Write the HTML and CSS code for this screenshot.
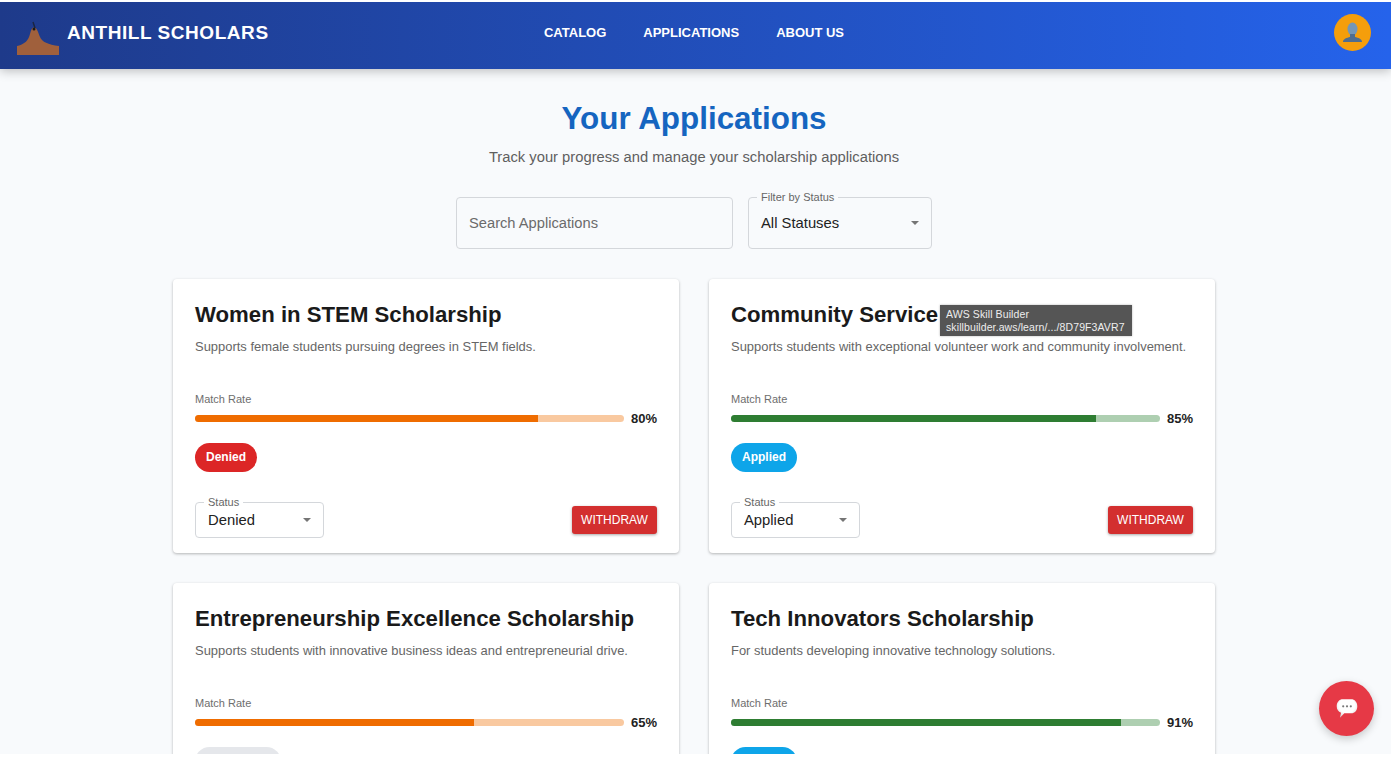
FILE: index.html
```html
<!DOCTYPE html>
<html lang="en">
<head>
  <meta charset="UTF-8">
  <meta name="viewport" content="width=device-width, initial-scale=1.0">
  <title>Your Applications</title>
  <link rel="stylesheet" href="styles.css">
</head>
<body>
  <div class="screen">
    <header class="topbar">
      <div class="brand">
        <svg class="brand-logo" viewBox="0 0 42 36" width="42" height="36">
          <path d="M0 35V26C6 24.500 10 22 12 17C14 12 14 7.500 17 7.500C20 7.500 21 12 23 17C25 22 31 24.500 42 26V35Z" fill="#a0603c"/>
          <path d="M16 2L18 8" stroke="#1a2540" stroke-width="1.4"/>
          <circle cx="17" cy="9" r="1.500" fill="#1a1a1a"/>
        </svg>
        <span class="brand-name">ANTHILL SCHOLARS</span>
      </div>
      <nav class="nav">
        <a>CATALOG</a>
        <a>APPLICATIONS</a>
        <a>ABOUT US</a>
      </nav>
      <div class="avatar">
        <svg viewBox="0 0 37 37" width="37" height="37">
          <ellipse cx="18.500" cy="15" rx="5" ry="6.500" fill="#7396b6"/>
          <path d="M16 20H21V23C24 24 28 24.500 28 28H9C9 24.500 13 24 16 23Z" fill="#4f6d8f"/>
        </svg>
      </div>
    </header>

    <main class="content">
      <h1 class="title">Your Applications</h1>
      <p class="subtitle">Track your progress and manage your scholarship applications</p>

      <div class="filters">
        <div class="field search-field">
          <span class="placeholder">Search Applications</span>
        </div>
        <div class="field status-field">
          <span class="field-label">Filter by Status</span>
          <span class="field-value">All Statuses</span>
          <span class="caret"></span>
        </div>
      </div>

      <div class="cards">
        <section class="card">
          <h2>Women in STEM Scholarship</h2>
          <p class="desc">Supports female students pursuing degrees in STEM fields.</p>
          <div class="match-label">Match Rate</div>
          <div class="match">
            <div class="bar orange"><div class="fill" style="width: 80%"></div></div>
            <span class="pct">80%</span>
          </div>
          <span class="chip denied">Denied</span>
          <div class="card-actions">
            <div class="field mini-select">
              <span class="field-label">Status</span>
              <span class="field-value">Denied</span>
              <span class="caret"></span>
            </div>
            <button class="withdraw">WITHDRAW</button>
          </div>
        </section>

        <section class="card">
          <h2>Community Service</h2>
          <p class="desc">Supports students with exceptional volunteer work and community involvement.</p>
          <div class="match-label">Match Rate</div>
          <div class="match">
            <div class="bar green"><div class="fill" style="width: 85%"></div></div>
            <span class="pct">85%</span>
          </div>
          <span class="chip applied">Applied</span>
          <div class="card-actions">
            <div class="field mini-select">
              <span class="field-label">Status</span>
              <span class="field-value">Applied</span>
              <span class="caret"></span>
            </div>
            <button class="withdraw">WITHDRAW</button>
          </div>
        </section>

        <section class="card">
          <h2>Entrepreneurship Excellence Scholarship</h2>
          <p class="desc">Supports students with innovative business ideas and entrepreneurial drive.</p>
          <div class="match-label">Match Rate</div>
          <div class="match">
            <div class="bar orange"><div class="fill" style="width: 65%"></div></div>
            <span class="pct">65%</span>
          </div>
          <span class="chip draft">&nbsp;</span>
        </section>

        <section class="card">
          <h2>Tech Innovators Scholarship</h2>
          <p class="desc">For students developing innovative technology solutions.</p>
          <div class="match-label">Match Rate</div>
          <div class="match">
            <div class="bar green"><div class="fill" style="width: 91%"></div></div>
            <span class="pct">91%</span>
          </div>
          <span class="chip applied cut">&nbsp;</span>
        </section>
      </div>
    </main>

    <div class="link-tip">
      <div>AWS Skill Builder</div>
      <div>skillbuilder.aws/learn/.../8D79F3AVR7</div>
    </div>

    <button class="chat-fab">
      <svg viewBox="0 0 24 24" width="26" height="26">
        <defs>
          <radialGradient id="bubble" cx="50%" cy="35%" r="65%">
            <stop offset="60%" stop-color="#fff"/>
            <stop offset="100%" stop-color="#d8d2d2"/>
          </radialGradient>
        </defs>
        <path d="M8 3H16C19 3 21.500 5.500 21.500 9.500C21.500 13.500 19 16 16 16H9.500L5.500 20L6.500 15.500C4 14.500 2.500 12.500 2.500 9.500C2.500 5.500 5 3 8 3Z" fill="url(#bubble)"/>
        <circle cx="8.500" cy="9.500" r="1" fill="#777"/>
        <circle cx="12" cy="9.500" r="1" fill="#777"/>
        <circle cx="15.500" cy="9.500" r="1" fill="#777"/>
      </svg>
    </button>
  </div>
</body>
</html>
```

FILE: styles.css
```css
* {
  box-sizing: border-box;
}

html, body {
  height: 100%;
}

body {
  margin: 0;
  background-color: #fff;
  overflow: hidden;
  font-family: "Liberation Sans", Arial, sans-serif;
}

.screen {
  position: relative;
  width: 1391px;
  height: 752px;
  margin-top: 2px;
  background-color: #f8fafc;
  overflow: hidden;
}

/* top bar */
.topbar {
  display: grid;
  grid-template-columns: 1fr auto 1fr;
  align-items: center;
  height: 67px;
  padding: 0 20px 0 17px;
  background: linear-gradient(90deg, #1e3a8a, #2563eb);
  box-shadow: 0 2px 10px rgba(0, 0, 0, 0.25);
}

.brand {
  display: flex;
  align-items: center;
  gap: 8px;
}

.brand-logo {
  margin-top: 4px;
}

.brand-name {
  margin-top: -6px;
  font-size: 19px;
  font-weight: 700;
  letter-spacing: 0.55px;
  color: #fff;
}

.nav {
  display: flex;
  gap: 37px;
  margin-top: -6px;
}

.nav a {
  font-size: 13px;
  font-weight: 700;
  color: #fff;
}

.avatar {
  justify-self: end;
  width: 37px;
  height: 37px;
  margin-top: -6px;
  border-radius: 50%;
  background-color: #f59e0b;
}

/* page heading */
.content {
  display: flex;
  flex-direction: column;
  align-items: center;
  padding: 31px 3px 0 0;
}

.title {
  margin: 0;
  font-size: 31.4px;
  line-height: 37px;
  font-weight: 700;
  color: #1565c0;
}

.subtitle {
  margin: 12px 0 0;
  font-size: 14.75px;
  line-height: 17px;
  color: #5f5f5f;
}

/* filters */
.filters {
  display: flex;
  gap: 15px;
  margin-top: 31px;
}

.field {
  position: relative;
  display: flex;
  align-items: center;
  background-color: transparent;
  border: 1.5px solid #d4d7db;
  border-radius: 4px;
  padding-left: 12px;
  color: #222;
}

.search-field {
  width: 277px;
  height: 52px;
}

.status-field {
  width: 184px;
  height: 52px;
}

.placeholder {
  font-size: 14.7px;
  color: #6b6b6b;
}

.field-value {
  font-size: 14.8px;
}

.field-label {
  position: absolute;
  top: -7px;
  left: 8px;
  padding: 0 4px;
  background-color: #f8fafc;
  font-size: 11px;
  line-height: 12px;
  color: #666;
}

.caret {
  position: absolute;
  right: 12px;
  top: 50%;
  margin-top: -2px;
  border-left: 4.500px solid transparent;
  border-right: 4.500px solid transparent;
  border-top: 4.500px solid #757575;
}

/* scholarship cards */
.cards {
  display: grid;
  grid-template-columns: 506px 506px;
  gap: 30px;
  margin-top: 30px;
}

.card {
  height: 274px;
  padding: 22px;
  background-color: #fff;
  border-radius: 4px;
  box-shadow: 0 1px 3px rgba(0, 0, 0, 0.28);
}

.card h2 {
  margin: 0;
  font-size: 22.2px;
  line-height: 28px;
  font-weight: 700;
  color: #1a1a1a;
}

.desc {
  margin: 10px 0 0;
  font-size: 12.95px;
  line-height: 15px;
  color: #666;
}

.match-label {
  margin-top: 39px;
  font-size: 11px;
  line-height: 13px;
  color: #6e6e6e;
}

.match {
  display: flex;
  align-items: center;
  gap: 7px;
  margin-top: 5px;
  height: 14px;
}

.bar {
  flex: 1;
  height: 7px;
  border-radius: 4px;
  overflow: hidden;
}

.fill {
  height: 100%;
}

.bar.orange {
  background-color: #f9c9a0;
}

.bar.orange .fill {
  background-color: #ef6c00;
}

.bar.green {
  background-color: #aecfb1;
}

.bar.green .fill {
  background-color: #2e7d32;
}

.pct {
  font-size: 13px;
  font-weight: 700;
  color: #222;
}

.chip {
  display: inline-block;
  margin-top: 18px;
  height: 29px;
  padding: 0 11px;
  border-radius: 15px;
  font-size: 12px;
  line-height: 28px;
  font-weight: 700;
  color: #fff;
}

.chip.denied {
  background-color: #dc2626;
}

.chip.applied {
  background-color: #0ea5e9;
}

.chip.draft {
  width: 86px;
  background-color: #e5e7eb;
}

/* bottom chip runs off the screen, its label is below the fold */
.chip.cut {
  width: 66px;
}

.card-actions {
  display: flex;
  justify-content: space-between;
  align-items: center;
  margin-top: 30px;
}

.mini-select {
  width: 129px;
  height: 36px;
  background-color: #fff;
}

.mini-select .field-label {
  background-color: #fff;
}

.withdraw {
  width: 85px;
  height: 28px;
  padding: 0;
  border: none;
  border-radius: 3px;
  background-color: #d32f2f;
  box-shadow: 0 1px 3px rgba(0, 0, 0, 0.35);
  font-family: inherit;
  font-size: 12px;
  color: #fff;
}

/* browser link preview sitting over the page */
.link-tip {
  position: absolute;
  left: 940px;
  top: 303px;
  width: 192px;
  height: 31px;
  padding: 3px 6px;
  background-color: #555;
  box-shadow: 0 0 2px rgba(0, 0, 0, 0.3);
  font-size: 10.5px;
  line-height: 13px;
  letter-spacing: 0.1px;
  color: #eee;
}

.chat-fab {
  position: absolute;
  left: 1319px;
  top: 679px;
  display: flex;
  align-items: center;
  justify-content: center;
  width: 55px;
  height: 55px;
  padding: 0;
  border: none;
  border-radius: 50%;
  background-color: #e63946;
  box-shadow: 0 3px 8px rgba(0, 0, 0, 0.2);
}
```
